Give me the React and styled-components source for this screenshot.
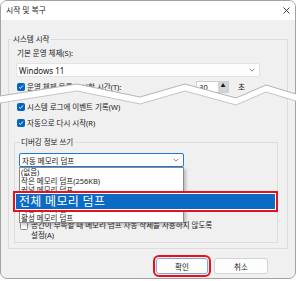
import React from "react";
import styled, { createGlobalStyle } from "styled-components";

const GlobalStyle = createGlobalStyle`
  html, body {
    margin: 0;
    padding: 0;
    background: #ffffff;
  }
  body {
    font-family: "Noto Sans", "Noto Sans CJK KR", sans-serif;
    font-size: 7.5px;
    color: #1a1a1a;
  }
`;

const Page = styled.div`
  position: relative;
  width: 296px;
  height: 281px;
  overflow: hidden;
`;

const Window = styled.div`
  width: 296px;
  height: 279px;
  box-sizing: border-box;
  border: 1px solid #a3a3a3;
  border-radius: 7px;
  overflow: hidden;
  background: #f0f0f0;
  display: flex;
  flex-direction: column;
`;

const TitleBar = styled.div`
  height: 19px;
  flex: none;
  background: #ffffff;
  display: flex;
  align-items: center;
  justify-content: space-between;
  padding: 0 5px 0 5px;
`;

const Title = styled.span`
  font-size: 7.8px;
  line-height: 11px;
`;

const Body = styled.div`
  flex: 1;
  padding: 19px 6px 0 7px;
  display: flex;
  flex-direction: column;
`;

const Group = styled.div`
  box-sizing: border-box;
  width: ${(p) => p.$w}px;
  height: ${(p) => p.$h}px;
  border: 1px solid #dcdcdc;
  padding-left: ${(p) => p.$pad}px;
  display: flex;
  flex-direction: column;
  align-items: flex-start;
`;

const Legend = styled.div`
  margin: -6px 0 0 ${(p) => p.$ml}px;
  padding: 0 1px;
  background: #f0f0f0;
  line-height: 11px;
`;

const FieldLabel = styled.div`
  margin-top: 3px;
  line-height: 11px;
`;

const Combo = styled.div`
  position: relative;
  box-sizing: border-box;
  width: ${(p) => p.$w}px;
  height: 14px;
  background: #fdfdfd;
  border: 1px solid ${(p) => (p.$focus ? "#1f78d1" : "#e3e3e3")};
  border-radius: 2px;
  display: flex;
  align-items: center;
  justify-content: space-between;
  padding: 0 4px 0 2px;
  font-size: ${(p) => (p.$latin ? "8px" : "7.5px")};
`;

const Row = styled.div`
  display: flex;
  align-items: center;
  height: 12px;
  margin-top: ${(p) => p.$mt}px;
  align-self: stretch;
`;

const Box = styled.span`
  box-sizing: border-box;
  width: 8px;
  height: 8px;
  flex: none;
  border-radius: 1.5px;
  background: ${(p) => (p.$checked ? "#0067c0" : "#ffffff")};
  border: 1px solid ${(p) => (p.$checked ? "#0067c0" : "#8a8a8a")};
  display: flex;
  align-items: center;
  justify-content: center;
`;

const RowText = styled.span`
  margin-left: 2px;
  line-height: 11px;
  flex: ${(p) => (p.$grow ? 1 : "none")};
`;

const Spinner = styled.div`
  box-sizing: border-box;
  width: 33px;
  height: 12px;
  border: 1px solid #cfcfcf;
  background: #ffffff;
  display: flex;
  justify-content: space-between;
  align-items: stretch;
`;

const SpinValue = styled.span`
  padding-left: 2px;
  line-height: 10px;
`;

const SpinButton = styled.span`
  width: 10px;
  background: #d4d4d4;
  font-size: 5px;
  text-align: center;
  line-height: 7px;
`;

const Unit = styled.span`
  margin: 0 42px 0 9px;
  line-height: 11px;
`;

const InnerStack = styled.div`
  position: relative;
  margin-top: 5px;
`;

const DropList = styled.div`
  position: absolute;
  top: 14px;
  left: 0;
  box-sizing: border-box;
  width: 165px;
  height: 56px;
  background: #ffffff;
  border: 1px solid #8c8c8c;
  box-shadow: 2px 2px 3px rgba(0, 0, 0, 0.22);
  z-index: 2;
`;

const DropItem = styled.div`
  height: 9.2px;
  line-height: 9.2px;
  padding-left: 1px;
  white-space: nowrap;
`;

const Highlight = styled.div`
  position: absolute;
  left: -7px;
  top: 23px;
  box-sizing: border-box;
  width: 265px;
  height: 21px;
  border: 2px solid #e8101c;
  background: #ffffff;
  padding: 1px;
  z-index: 3;
`;

const HighlightFill = styled.div`
  height: 100%;
  background: #0a6ac4;
  color: #ffffff;
  font-size: 12px;
  line-height: 15px;
  padding-left: 3px;
  letter-spacing: 0.3px;
`;

const WrapRow = styled.div`
  display: flex;
  align-items: flex-start;
  margin: 53px 0 0 1px;
`;

const WrapText = styled.span`
  margin-left: 3px;
  line-height: 10px;
`;

const ButtonRow = styled.div`
  display: flex;
  justify-content: flex-end;
  gap: 6px;
  margin-top: 9px;
  padding-right: 21px;
`;

const Button = styled.button`
  box-sizing: border-box;
  width: ${(p) => p.$w}px;
  height: 16px;
  padding: 0;
  font: inherit;
  color: #1a1a1a;
  background: #fdfdfd;
  border: 1px solid ${(p) => (p.$primary ? "#7fa9d9" : "#d3d3d3")};
  border-radius: 3px;
  outline: ${(p) => (p.$marked ? "2px solid #e8101c" : "none")};
  outline-offset: 1px;
`;

const Tear = styled.svg`
  position: absolute;
  left: 0;
  top: 78px;
  z-index: 5;
`;

const CloseIcon = () => (
  <svg width="7" height="7" viewBox="0 0 7 7">
    <path d="M0.5 0.5L6.5 6.5M6.5 0.5L0.5 6.5" stroke="#2a2a2a" strokeWidth="0.9" />
  </svg>
);

const Chevron = () => (
  <svg width="6" height="4" viewBox="0 0 6 4">
    <path d="M0.5 0.7L3 3.2L5.5 0.7" stroke="#6a6a6a" strokeWidth="0.8" fill="none" />
  </svg>
);

const Check = ({ checked }) => (
  <Box $checked={checked}>
    {checked && (
      <svg width="6" height="6" viewBox="0 0 6 6">
        <path d="M1 3.2L2.4 4.5L5 1.5" stroke="#fff" strokeWidth="0.9" fill="none" />
      </svg>
    )}
  </Box>
);

const upper = [
  [0, 18], [77, 6], [140, 19], [185, 6], [236, 20], [266, 7], [296, 16],
];
const lower = upper.map(([x, y]) => [x, y + 7]);
const pts = (arr) => arr.map(([x, y]) => `${x},${y}`).join(" ");

const dumpOptions = [
  "(없음)",
  "작은 메모리 덤프(256KB)",
  "커널 메모리 덤프",
  "전체 메모리 덤프",
  "자동 메모리 덤프",
  "활성 메모리 덤프",
];

const App = () => {
  return (
    <Page>
      <GlobalStyle />
      <Window>
        <TitleBar>
          <Title>시작 및 복구</Title>
          <CloseIcon />
        </TitleBar>
        <Body>
          <Group $w={280} $h={210} $pad={8}>
            <Legend $ml={-5}>시스템 시작</Legend>
            <FieldLabel>기본 운영 체제(S):</FieldLabel>
            <Combo $w={244} $latin style={{ marginTop: 4, marginLeft: -1 }}>
              <span>Windows 11</span>
              <Chevron />
            </Combo>
            <Row $mt={4}>
              <Check checked />
              <RowText $grow>운영 체제 목록 표시할 시간(T):</RowText>
              <Spinner>
                <SpinValue>30</SpinValue>
                <SpinButton>▲</SpinButton>
              </Spinner>
              <Unit>초</Unit>
            </Row>
            <Row $mt={8}>
              <Check checked />
              <RowText>시스템 로그에 이벤트 기록(W)</RowText>
            </Row>
            <Row $mt={4}>
              <Check checked />
              <RowText>자동으로 다시 시작(R)</RowText>
            </Row>
            <Group $w={264} $h={101} $pad={4} style={{ marginTop: 13, marginLeft: -3 }}>
              <Legend $ml={1}>디버깅 정보 쓰기</Legend>
              <InnerStack>
                <Combo $w={165} $focus>
                  <span>자동 메모리 덤프</span>
                  <Chevron />
                </Combo>
                <DropList>
                  {dumpOptions.map((o) => (
                    <DropItem key={o}>{o}</DropItem>
                  ))}
                  <Highlight>
                    <HighlightFill>전체 메모리 덤프</HighlightFill>
                  </Highlight>
                </DropList>
              </InnerStack>
              <WrapRow>
                <span style={{ marginTop: 2 }}>
                  <Check />
                </span>
                <WrapText>
                  공간이 부족할 때 메모리 덤프 자동 삭제를 사용하지 않도록
                  <br />
                  설정(A)
                </WrapText>
              </WrapRow>
            </Group>
          </Group>
          <ButtonRow>
            <Button $w={52} $primary $marked>
              확인
            </Button>
            <Button $w={54}>취소</Button>
          </ButtonRow>
        </Body>
      </Window>
      <Tear width="296" height="30" viewBox="0 0 296 30">
        <polygon points={`${pts(upper)} ${pts([...lower].reverse())}`} fill="#ffffff" />
        <polyline points={pts(upper)} fill="none" stroke="#b4b4b4" strokeWidth="1" />
        <polyline points={pts(lower)} fill="none" stroke="#c4c4c4" strokeWidth="1" />
      </Tear>
    </Page>
  );
};

export default App;
